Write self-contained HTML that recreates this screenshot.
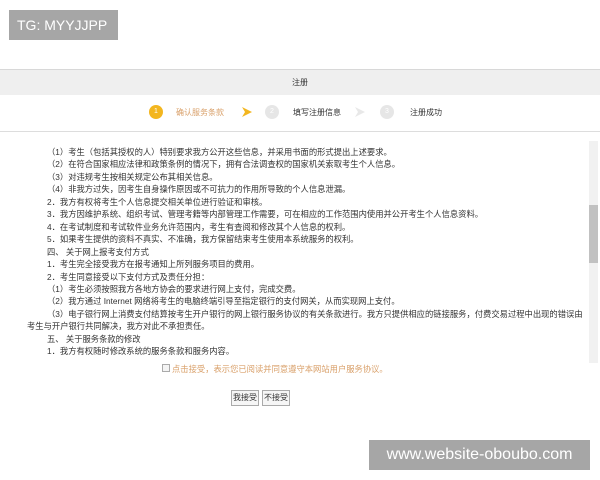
<!DOCTYPE html>
<html><head><meta charset="utf-8"><style>
*{margin:0;padding:0;box-sizing:border-box}
body{width:600px;height:480px;background:#fff;position:relative;overflow:hidden;font-family:"Liberation Sans","Noto Sans CJK SC",sans-serif;color:#333}
.tg{position:absolute;left:9px;top:10px;width:109px;height:30px;background:#a6a6a6;color:#fff;font-size:14px;line-height:30px;padding-left:8px;white-space:nowrap;overflow:hidden}
.hd{position:absolute;left:0;top:69px;width:600px;height:26px;background:#efefef;border-top:1px solid #d8d8d8;text-align:center;font-size:8px;line-height:25px;color:#333}
.steps{position:absolute;left:0;top:96px;width:600px;height:36px;border-bottom:1px solid #ddd;font-size:8px}
.c{position:absolute;top:9px;width:14px;height:14px;border-radius:50%;font-size:7px;color:#fff;text-align:center;line-height:14px}
.s{position:absolute;top:11px;line-height:12px}
.ar{position:absolute;top:10px}
.txt{position:absolute;left:27px;top:146px;width:560px;font-size:8.3px;line-height:12.45px;color:#333;white-space:nowrap}
.sb{position:absolute;left:589px;top:141px;width:9px;height:222px;background:#f1f1f1}
.th{position:absolute;left:589px;top:205px;width:9px;height:58px;background:#c1c1c1}
.cb{position:absolute;left:162px;top:364px;width:8px;height:8px;border:1px solid #aaa;background:#f4f4f4}
.ag{position:absolute;left:172px;top:363px;font-size:8.3px;color:#d9a06a}
.bt{position:absolute;top:390px;height:16px;width:28px;border:1px solid #aaa;background:#f6f6f6;font-size:8px;line-height:14px;text-align:center;color:#333}
.wm{position:absolute;left:369px;top:440px;width:221px;height:30px;background:#a6a6a6;color:#fff;font-size:16px;line-height:30px;text-align:center}
</style></head><body>
<div class="tg">TG: MYYJJPP</div>
<div class="hd">注册</div>
<div class="steps">
<div class="c" style="left:149px;background:#f3b61f">1</div>
<div class="s" style="left:176px;color:#d9a06a">确认服务条款</div>
<svg class="ar" style="left:241px" width="12" height="12" viewBox="0 0 12 12"><path d="M1 1 L11 6 L1 11 L4 6 Z" fill="#f3b61f"/></svg>
<div class="c" style="left:265px;background:#e6e6e6">2</div>
<div class="s" style="left:293px">填写注册信息</div>
<svg class="ar" style="left:354px" width="12" height="12" viewBox="0 0 12 12"><path d="M1 1 L11 6 L1 11 L4 6 Z" fill="#e8e8e8"/></svg>
<div class="c" style="left:380px;background:#e6e6e6">3</div>
<div class="s" style="left:410px">注册成功</div>
</div>
<div class="txt">
<div style="padding-left:20px">（1）考生（包括其授权的人）特别要求我方公开这些信息，并采用书面的形式提出上述要求。</div>
<div style="padding-left:20px">（2）在符合国家相应法律和政策条例的情况下，拥有合法调查权的国家机关索取考生个人信息。</div>
<div style="padding-left:20px">（3）对违规考生按相关规定公布其相关信息。</div>
<div style="padding-left:20px">（4）非我方过失，因考生自身操作原因或不可抗力的作用所导致的个人信息泄漏。</div>
<div style="padding-left:20px">2．我方有权将考生个人信息提交相关单位进行验证和审核。</div>
<div style="padding-left:20px">3．我方因维护系统、组织考试、管理考籍等内部管理工作需要，可在相应的工作范围内使用并公开考生个人信息资料。</div>
<div style="padding-left:20px">4．在考试制度和考试软件业务允许范围内，考生有查阅和修改其个人信息的权利。</div>
<div style="padding-left:20px">5．如果考生提供的资料不真实、不准确，我方保留结束考生使用本系统服务的权利。</div>
<div style="padding-left:20px">四、 关于网上报考支付方式</div>
<div style="padding-left:20px">1．考生完全接受我方在报考通知上所列服务项目的费用。</div>
<div style="padding-left:20px">2．考生同意接受以下支付方式及责任分担：</div>
<div style="padding-left:20px">（1）考生必须按照我方各地方协会的要求进行网上支付，完成交费。</div>
<div style="padding-left:20px">（2）我方通过 Internet 网络将考生的电脑终端引导至指定银行的支付网关，从而实现网上支付。</div>
<div style="padding-left:20px">（3）电子银行网上消费支付结算按考生开户银行的网上银行服务协议的有关条款进行。我方只提供相应的链接服务，付费交易过程中出现的错误由</div>
<div>考生与开户银行共同解决，我方对此不承担责任。</div>
<div style="padding-left:20px">五、 关于服务条款的修改</div>
<div style="padding-left:20px">1．我方有权随时修改系统的服务条款和服务内容。</div>
</div>
<div class="sb"></div><div class="th"></div>
<div class="cb"></div>
<div class="ag">点击接受，表示您已阅读并同意遵守本网站用户服务协议。</div>
<div class="bt" style="left:231px">我接受</div>
<div class="bt" style="left:262px">不接受</div>
<div class="wm">www.website-oboubo.com</div>
</body></html>
